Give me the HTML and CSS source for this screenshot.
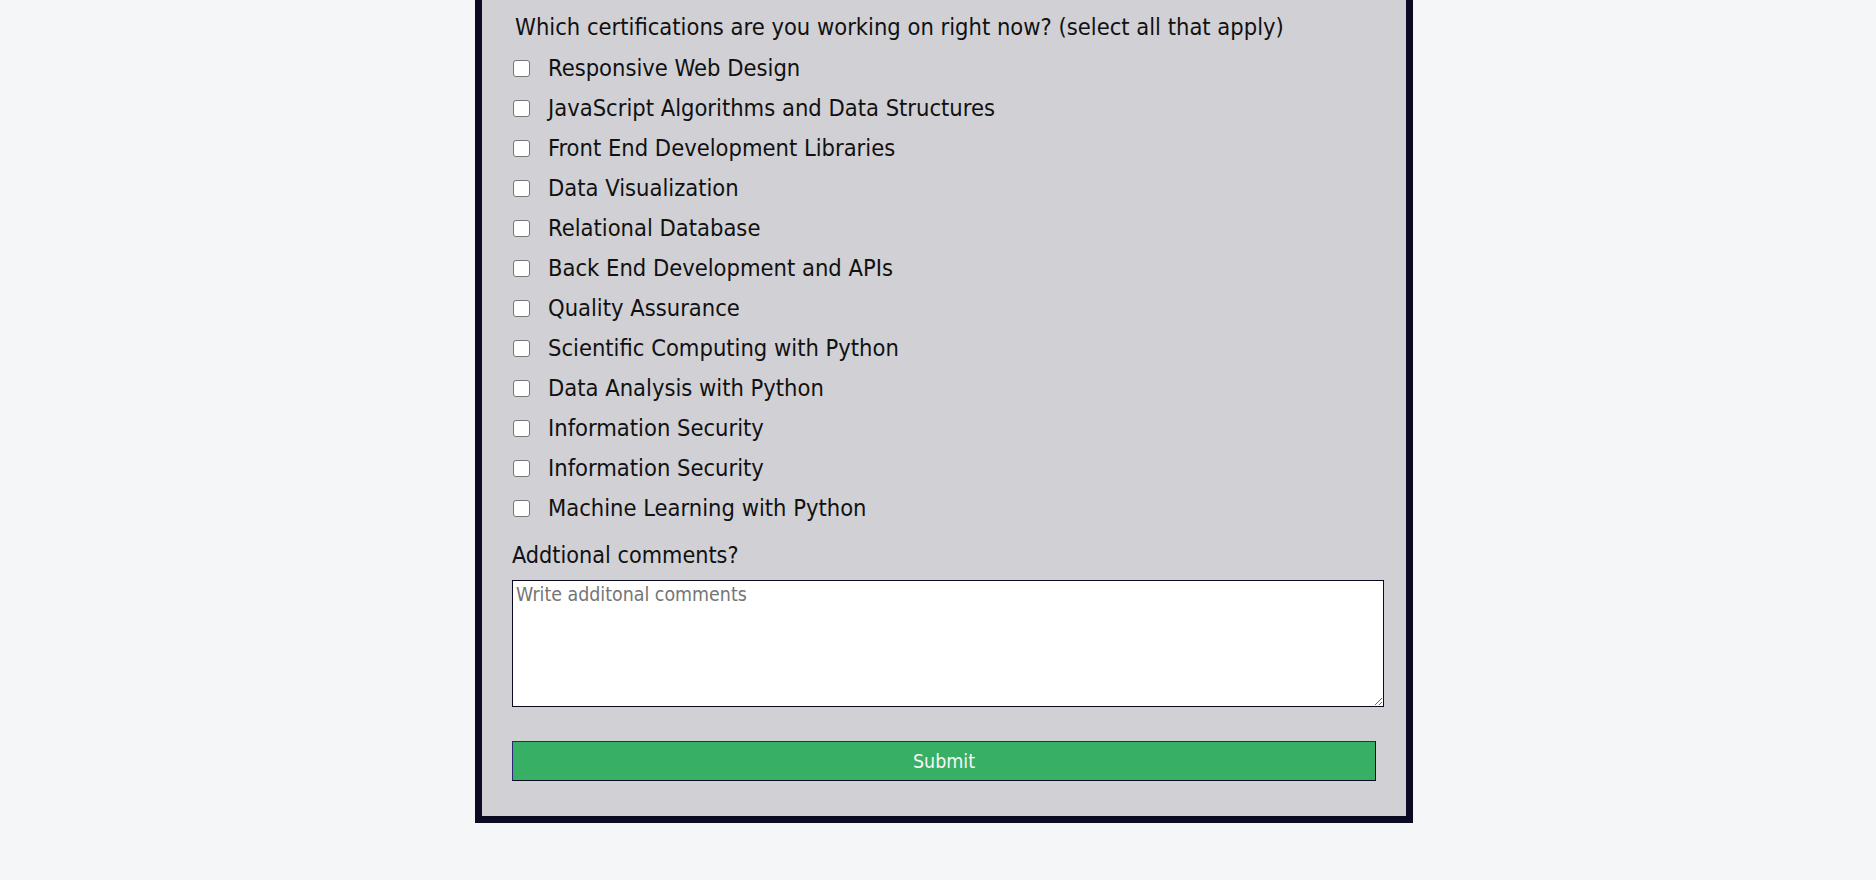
FILE: index.html
```html
<!DOCTYPE html>
<html lang="en">
<head>
<meta charset="utf-8">
<title>Survey Form</title>
<link rel="stylesheet" href="styles.css">
</head>
<body>
<form class="panel">
  <p class="question">Which certifications are you working on right now? (select all that apply)</p>
  <ul class="checks">
    <li class="check"><input type="checkbox" class="box"><label>Responsive Web Design</label></li>
    <li class="check"><input type="checkbox" class="box"><label>JavaScript Algorithms and Data Structures</label></li>
    <li class="check"><input type="checkbox" class="box"><label>Front End Development Libraries</label></li>
    <li class="check"><input type="checkbox" class="box"><label>Data Visualization</label></li>
    <li class="check"><input type="checkbox" class="box"><label>Relational Database</label></li>
    <li class="check"><input type="checkbox" class="box"><label>Back End Development and APIs</label></li>
    <li class="check"><input type="checkbox" class="box"><label>Quality Assurance</label></li>
    <li class="check"><input type="checkbox" class="box"><label>Scientific Computing with Python</label></li>
    <li class="check"><input type="checkbox" class="box"><label>Data Analysis with Python</label></li>
    <li class="check"><input type="checkbox" class="box"><label>Information Security</label></li>
    <li class="check"><input type="checkbox" class="box"><label>Information Security</label></li>
    <li class="check"><input type="checkbox" class="box"><label>Machine Learning with Python</label></li>
  </ul>
  <label class="comments-label">Addtional comments?</label>
  <textarea class="comments" placeholder="Write additonal comments"></textarea>
  <button type="button" class="submit">Submit</button>
</form>
</body>
</html>
```
FILE: styles.css
```css
html, body {
  margin: 0;
  padding: 0;
  background: #f5f6f7;
}

body {
  font-family: "DejaVu Sans Condensed", "DejaVu Sans", sans-serif;
  color: #0a0a23;
}

.panel {
  display: block;
  width: 864px;
  margin-left: 475px;
  padding: 7px 30px 35px;
  background: #d0d0d5;
  border: 7px solid #0a0a23;
  border-top: 0;
}

.question {
  margin: 0;
  padding-left: 3px;
  font-size: 23.5px;
  line-height: 40px;
  color: #111;
}

.checks {
  list-style: none;
  margin: 1px 0 0;
  padding: 0;
}

.check {
  display: flex;
  align-items: center;
  height: 40px;
  padding-left: 1px;
  font-size: 23.5px;
  color: #111;
}

.box {
  appearance: none;
  -webkit-appearance: none;
  width: 17px;
  height: 17px;
  margin: 0 18px 0 0;
  background: #fff;
  border: 1px solid #767676;
  border-radius: 3px;
  box-sizing: border-box;
  flex: none;
}

.comments-label {
  display: block;
  margin-top: 7px;
  font-size: 23.2px;
  line-height: 40px;
  color: #111;
}

.comments {
  display: block;
  box-sizing: border-box;
  width: 872px;
  height: 127px;
  margin-top: 5px;
  padding: 2px 3px;
  border: 1px solid #0a0a23;
  background: #fff;
  font-family: "DejaVu Sans Condensed", "DejaVu Sans", sans-serif;
  font-size: 19.4px;
  color: #111;
  resize: both;
}

.comments::placeholder {
  color: #757575;
}

.submit {
  display: block;
  box-sizing: border-box;
  width: 864px;
  height: 40px;
  margin-top: 34px;
  padding: 0;
  background: #37af65;
  border: 1px solid #0a0a23;
  border-top-color: #2a2575;
  border-left-color: #2a2575;
  color: #f5f6f7;
  font-family: "DejaVu Sans Condensed", "DejaVu Sans", sans-serif;
  font-size: 19.5px;
}
```
